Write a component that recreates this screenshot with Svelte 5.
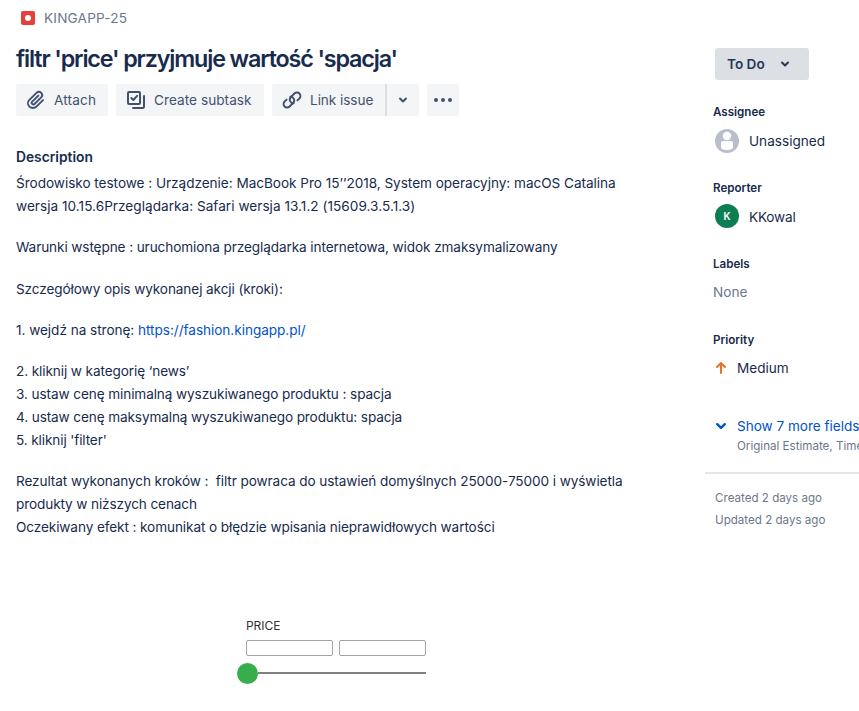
<script>
  const paragraphs = [
    [
      { text: 'Środowisko testowe : Urządzenie: MacBook Pro 15’’2018, System operacyjny: macOS Catalina', cls: 't1' },
      { text: 'wersja 10.15.6Przeglądarka: Safari wersja 13.1.2 (15609.3.5.1.3)', cls: 't2' }
    ],
    [{ text: 'Warunki wstępne : uruchomiona przeglądarka internetowa, widok zmaksymalizowany', cls: 't3' }],
    [{ text: 'Szczegółowy opis wykonanej akcji (kroki):', cls: 't4' }],
    [{ text: '1. wejdź na stronę: ', link: 'https://fashion.kingapp.pl/', cls: 't5' }],
    [
      { text: '2. kliknij w kategorię ‘news’', cls: 't6' },
      { text: '3. ustaw cenę minimalną wyszukiwanego produktu : spacja', cls: 't7' },
      { text: '4. ustaw cenę maksymalną wyszukiwanego produktu: spacja', cls: 't8' },
      { text: "5. kliknij 'filter'", cls: 't9' }
    ],
    [
      { text: 'Rezultat wykonanych kroków :  filtr powraca do ustawień domyślnych 25000-75000 i wyświetla', cls: 't10' },
      { text: 'produkty w niższych cenach', cls: 't11' },
      { text: 'Oczekiwany efekt : komunikat o błędzie wpisania nieprawidłowych wartości', cls: 't12' }
    ]
  ];
</script>

<div class="page">
  <main>
    <div class="crumb">
      <svg width="14" height="14" viewBox="0 0 14 14"><rect width="14" height="14" rx="2" fill="#e5403a" /><circle cx="7" cy="7" r="3" fill="#fff" /></svg>
      <span>KINGAPP-25</span>
    </div>
    <h1>filtr 'price' przyjmuje wartość 'spacja'</h1>
    <div class="toolbar">
      <button class="attach">
        <svg width="24" height="24" viewBox="0 0 24 24"><path fill="#42526e" fill-rule="evenodd" d="M11.643 17.965c-1.53 1.495-4.016 1.496-5.542.004a3.773 3.773 0 0 1 .002-5.412l7.147-6.985a2.316 2.316 0 0 1 3.233-.003c.893.873.895 2.282.004 3.153l-6.703 6.55a.653.653 0 0 1-.914-.008.62.62 0 0 1 0-.902l6.229-6.087a.941.941 0 0 0 0-1.353.995.995 0 0 0-1.384 0l-6.23 6.087a2.502 2.502 0 0 0 0 3.607 2.643 2.643 0 0 0 3.683.009l6.703-6.55a4.173 4.173 0 0 0-.003-5.859 4.31 4.31 0 0 0-6.002.003L4.72 11.204a5.653 5.653 0 0 0-.002 8.119c2.292 2.24 6.015 2.24 8.308-.001l6.697-6.544a.942.942 0 0 0 0-1.353.995.995 0 0 0-1.384 0z" /></svg>
        <span>Attach</span>
      </button>
      <button class="subtask">
        <svg width="24" height="24" viewBox="0 0 24 24" fill="none" stroke="#42526e" stroke-width="2" stroke-linecap="round" stroke-linejoin="round"><rect x="4" y="4" width="12" height="12" rx="1" /><path d="M7.3 10l2.1 2 3.7-4.2M20 8v10.5q0 1.5-1.5 1.5H9" /></svg>
        <span>Create subtask</span>
      </button>
      <div class="split">
        <button class="link">
          <svg width="24" height="24" viewBox="0 0 24 24" fill="none" stroke="#42526e" stroke-width="1.9" stroke-linecap="round"><path d="M13.2 15.4a3.7 3.7 0 0 1-3.5-2.2 3.7 3.7 0 0 1 .8-4.1l3.5-3.5a3.5 3.5 0 0 1 5 0 3.5 3.5 0 0 1 0 5l-2 1.9" transform="translate(.4 -.1)" /><path d="M10.8 8.6a3.7 3.7 0 0 1 3.5 2.2 3.7 3.7 0 0 1-.8 4.1L10 18.4a3.5 3.5 0 0 1-5 0 3.5 3.5 0 0 1 0-5l2-1.9" transform="translate(-.4 .1)" /></svg>
          <span>Link issue</span>
        </button>
        <button class="drop" aria-label="More link options">
          <svg width="10" height="8" viewBox="0 0 10 8"><path d="M2 2.5l3 3 3-3" fill="none" stroke="#42526e" stroke-width="2" stroke-linecap="round" stroke-linejoin="round" /></svg>
        </button>
      </div>
      <button class="dots" aria-label="More actions">
        <svg width="20" height="6" viewBox="0 0 20 6" fill="#42526e"><circle cx="3" cy="3" r="2" /><circle cx="10" cy="3" r="2" /><circle cx="17" cy="3" r="2" /></svg>
      </button>
    </div>

    <h2>Description</h2>
    <div class="description">
      {#each paragraphs as lines}
        <p>
          {#each lines as line}
            <span class="line {line.cls}">{line.text}{#if line.link}<a href={line.link}>{line.link}</a>{/if}</span>
          {/each}
        </p>
      {/each}
    </div>

    <div class="price">
      <div class="price-title">PRICE</div>
      <div class="boxes"><i></i><i></i></div>
      <div class="slider"><b></b></div>
    </div>
  </main>

  <aside>
    <button class="status">
      <span>To Do</span>
      <svg width="10" height="8" viewBox="0 0 10 8"><path d="M2 2.5l3 3 3-3" fill="none" stroke="#253858" stroke-width="2" stroke-linecap="round" stroke-linejoin="round" /></svg>
    </button>
    <section>
      <h3>Assignee</h3>
      <div class="value person">
        <svg width="24" height="24" viewBox="0 0 24 24"><circle cx="12" cy="12" r="12" fill="#b8bfca" /><circle cx="12" cy="7" r="4.2" fill="#fff" /><path fill="#fff" d="M8 12h8a2 2 0 0 1 2 2v3.8q0 3.2-6 3.2t-6-3.2V14a2 2 0 0 1 2-2z" /></svg>
        <span>Unassigned</span>
      </div>
    </section>
    <section>
      <h3>Reporter</h3>
      <div class="value person reporter">
        <div class="avatar">K</div>
        <span>KKowal</span>
      </div>
    </section>
    <section>
      <h3>Labels</h3>
      <div class="value none">None</div>
    </section>
    <section>
      <h3>Priority</h3>
      <div class="value medium">
        <svg width="12" height="14" viewBox="0 0 12 14"><path d="M6 12V2.5M2 6l4-4 4 4" fill="none" stroke="#e9722b" stroke-width="2" stroke-linecap="round" stroke-linejoin="round" /></svg>
        <span>Medium</span>
      </div>
    </section>
    <div class="more">
      <svg width="12" height="10" viewBox="0 0 12 10"><path d="M2.2 3.2L6 6.8l3.8-3.6" fill="none" stroke="#0052cc" stroke-width="2.4" stroke-linecap="round" stroke-linejoin="round" /></svg>
      <div>
        <div class="show">Show 7 more fields</div>
        <div class="fields">Original Estimate, Time</div>
      </div>
    </div>
    <div class="dates">
      <div>Created 2 days ago</div>
      <div>Updated 2 days ago</div>
    </div>
  </aside>
</div>

<style>
  :global(body) { background: #fff; overflow: hidden; }
  .page {
    width: 859px; height: 711px; overflow: hidden; display: flex; background: #fff;
    font-family: Inter, "Liberation Sans", sans-serif; font-size: 13.6px; color: #172b4d;
    white-space: nowrap;
  }
  main { width: 705px; padding-left: 16px; box-sizing: border-box; flex: none; }
  svg { display: block; flex: none; }
  button {
    font: inherit; color: #42526e; border: 0; margin: 0; padding: 0; height: 32px;
    background: #f4f5f7; border-radius: 3px; display: flex; align-items: center; box-sizing: border-box;
  }
  .crumb { display: flex; align-items: center; height: 20px; padding: 8px 0 0 5px; gap: 9px; color: #6b778c; letter-spacing: 0.18px; }
  h1 { margin: 17px 0 11px; font-size: 23.3px; line-height: 28px; font-weight: 600; letter-spacing: -1.14px; }
  .toolbar { display: flex; gap: 8px; }
  .attach { width: 92px; padding-left: 8px; gap: 6px; letter-spacing: 0.15px; }
  .subtask { width: 148px; padding-left: 8px; gap: 6px; letter-spacing: 0.05px; }
  .split { display: flex; width: 147px; }
  .link { width: 113px; padding-left: 8px; gap: 6px; border-radius: 3px 0 0 3px; letter-spacing: -0.06px; }
  .drop { width: 34px; border-left: 2px solid #dcdfe5; border-radius: 0 3px 3px 0; justify-content: center; }
  .dots { width: 32px; justify-content: center; }
  h2 { margin: 31px 0 4.5px; font-size: 13.8px; line-height: 20px; font-weight: 600; }
  .description { display: flex; flex-direction: column; gap: 18.4px; }
  p { margin: 0; display: flex; flex-direction: column; line-height: 23px; }
  .line { white-space: pre; letter-spacing: -0.1px; }
  .t1 { letter-spacing: -0.037px; }
  .t2 { letter-spacing: 0.027px; }
  .t4 { padding-top: 0.5px; margin-bottom: -0.5px; }
  .t5 { letter-spacing: -0.042px; }
  .t8 { letter-spacing: -0.118px; }
  .t9, .t11 { letter-spacing: -0.12px; }
  .t10 { letter-spacing: -0.088px; }
  a { color: #0052cc; text-decoration: none; }
  .price { width: 189.5px; margin: 80px 0 0 220.5px; }
  .price-title { padding-left: 9.5px; font-size: 12px; line-height: 14px; color: #333; letter-spacing: -0.05px; }
  .boxes { display: flex; gap: 6px; margin: 7px 0 0 9px; }
  .boxes i { width: 87px; height: 16px; flex: none; box-sizing: border-box; border: 1px solid #a3a3a3; border-radius: 2px; }
  .slider { display: flex; align-items: center; height: 21px; margin-top: 7px; }
  .slider b { width: 21px; height: 21px; border-radius: 50%; background: #37ad4b; }
  .slider::after { content: ""; flex: 1; height: 2px; background: #808080; margin-top: -2px; }
  aside { width: 154px; flex: none; padding-top: 48px; box-sizing: border-box; }
  .status { width: 94px; margin-left: 10px; padding-left: 12px; background: #dcdfe4; color: #253858; font-weight: 600; gap: 15px; }
  section { height: 76px; padding-left: 8px; box-sizing: border-box; }
  .status + section { margin-top: 24px; }
  h3 { margin: 0; font-size: 11.6px; line-height: 16px; font-weight: 600; }
  .value { display: flex; align-items: center; height: 24px; }
  .person { margin: 9px 0 0 2px; gap: 10px; }
  .reporter { letter-spacing: -0.2px; }
  .avatar { width: 24px; height: 24px; margin-top: -2px; border-radius: 50%; background: #0d7d53; color: #fff; font-size: 10px; font-weight: 600; line-height: 24px; text-align: center; }
  .none { margin-top: 8px; color: #6b778c; }
  .medium { margin: 8px 0 0 2px; gap: 10px; }
  .more { display: flex; gap: 10px; padding-left: 10px; margin-top: 8px; height: 56px; }
  .more svg { margin-top: 5px; }
  .show { line-height: 20px; color: #0052cc; letter-spacing: -0.03px; }
  .fields { font-size: 11.6px; line-height: 20px; color: #6b778c; }
  .dates { border-top: 2px solid #e4e6eb; padding: 13px 0 0 10px; font-size: 11.6px; line-height: 22px; color: #6b778c; }
</style>
